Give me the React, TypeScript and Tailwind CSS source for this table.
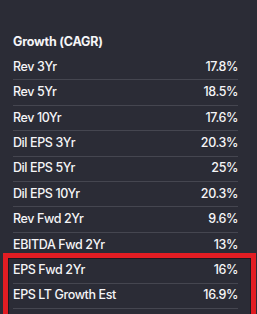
const rows: [string, string][] = [
  ["Rev 3Yr", "17.8%"],
  ["Rev 5Yr", "18.5%"],
  ["Rev 10Yr", "17.6%"],
  ["Dil EPS 3Yr", "20.3%"],
  ["Dil EPS 5Yr", "25%"],
  ["Dil EPS 10Yr", "20.3%"],
  ["Rev Fwd 2Yr", "9.6%"],
  ["EBITDA Fwd 2Yr", "13%"],
  ["EPS Fwd 2Yr", "16%"],
  ["EPS LT Growth Est", "16.9%"],
];

export default function App() {
  return (
    <div className="relative w-[257px] h-[314px] overflow-hidden bg-[#2b2c36] font-['Inter',sans-serif] text-[#f5f5f7]">
      <div className="pl-[13px] pr-[19px] pt-[33px]">
        <h2 className="text-[12.5px] font-bold leading-[18px] tracking-[-0.2px] mb-[4px]">Growth (CAGR)</h2>
        {rows.map(([label, value]) => (
          <div
            key={label}
            className="flex items-center justify-between h-[25.4px] border-b border-[#454650] text-[12.5px] font-medium tracking-[-0.4px]"
          >
            <span>{label}</span>
            <span>{value}</span>
          </div>
        ))}
      </div>
      <div className="absolute left-[3px] top-[253px] w-[253px] h-[70px] border-[5px] border-[#e21d23] shadow-[inset_0_0_0_1px_#1a1a20]" />
    </div>
  );
}
